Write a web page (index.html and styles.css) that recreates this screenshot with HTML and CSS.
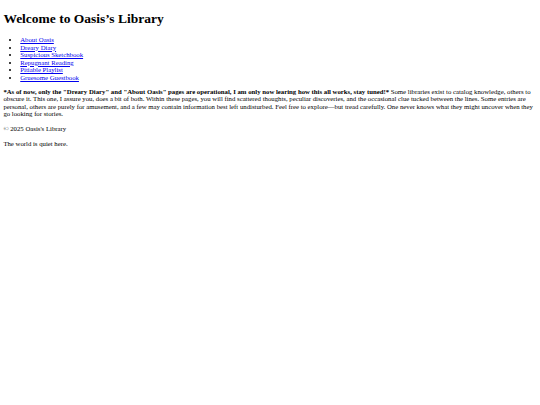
FILE: index.html
```html
<!DOCTYPE html>
<html lang="en">
<head>
<meta charset="utf-8">
<title>Oasis's Library</title>
<link rel="stylesheet" href="styles.css">
</head>
<body class="site">
<header class="site-header">
<h1 class="site-title">Welcome to Oasis’s Library</h1>
<nav class="site-nav">
<ul class="nav-list">
<li class="nav-item"><a class="nav-link" href="#about">About Oasis</a></li>
<li class="nav-item"><a class="nav-link" href="#diary">Dreary Diary</a></li>
<li class="nav-item"><a class="nav-link" href="#sketchbook">Suspicious Sketchbook</a></li>
<li class="nav-item"><a class="nav-link" href="#reading">Repugnant Reading</a></li>
<li class="nav-item"><a class="nav-link" href="#playlist">Pitiable Playlist</a></li>
<li class="nav-item"><a class="nav-link" href="#guestbook">Gruesome Guestbook</a></li>
</ul>
</nav>
</header>
<main class="site-main">
<p class="intro"><strong class="notice">*As of now, only the "Dreary Diary" and "About Oasis" pages are operational, I am only now learing how this all works, stay tuned!*</strong> Some libraries exist to catalog knowledge, others to obscure it. This one, I assure you, does a bit of both. Within these pages, you will find scattered thoughts, peculiar discoveries, and the occasional clue tucked between the lines. Some entries are personal, others are purely for amusement, and a few may contain information best left undisturbed. Feel free to explore—but tread carefully. One never knows what they might uncover when they go looking for stories.</p>
</main>
<footer class="site-footer">
<p class="copyright">© 2025 Oasis's Library</p>
</footer>
<p class="quiet">The world is quiet here.</p>
</body>
</html>
```

FILE: styles.css
```css
.site {
  margin: 3.375px;
  font-family: "Liberation Serif", "Times New Roman", serif;
  font-size: 6.75px;
  line-height: 1.107;
  color: #000;
  background: #fff;
}

.site-title {
  font-size: 13.5px;
  line-height: 1.107;
  font-weight: bold;
  margin: 9.045px 0;
}

.nav-list {
  margin: 6.75px 0;
  padding-left: 16.875px;
  list-style: disc;
}

.nav-link {
  color: #0000ee;
  text-decoration: underline;
}

.intro,
.copyright,
.quiet {
  margin: 6.75px 0;
}

.quiet {
  margin-top: 7.5px;
}

.notice {
  font-weight: bold;
}
```
